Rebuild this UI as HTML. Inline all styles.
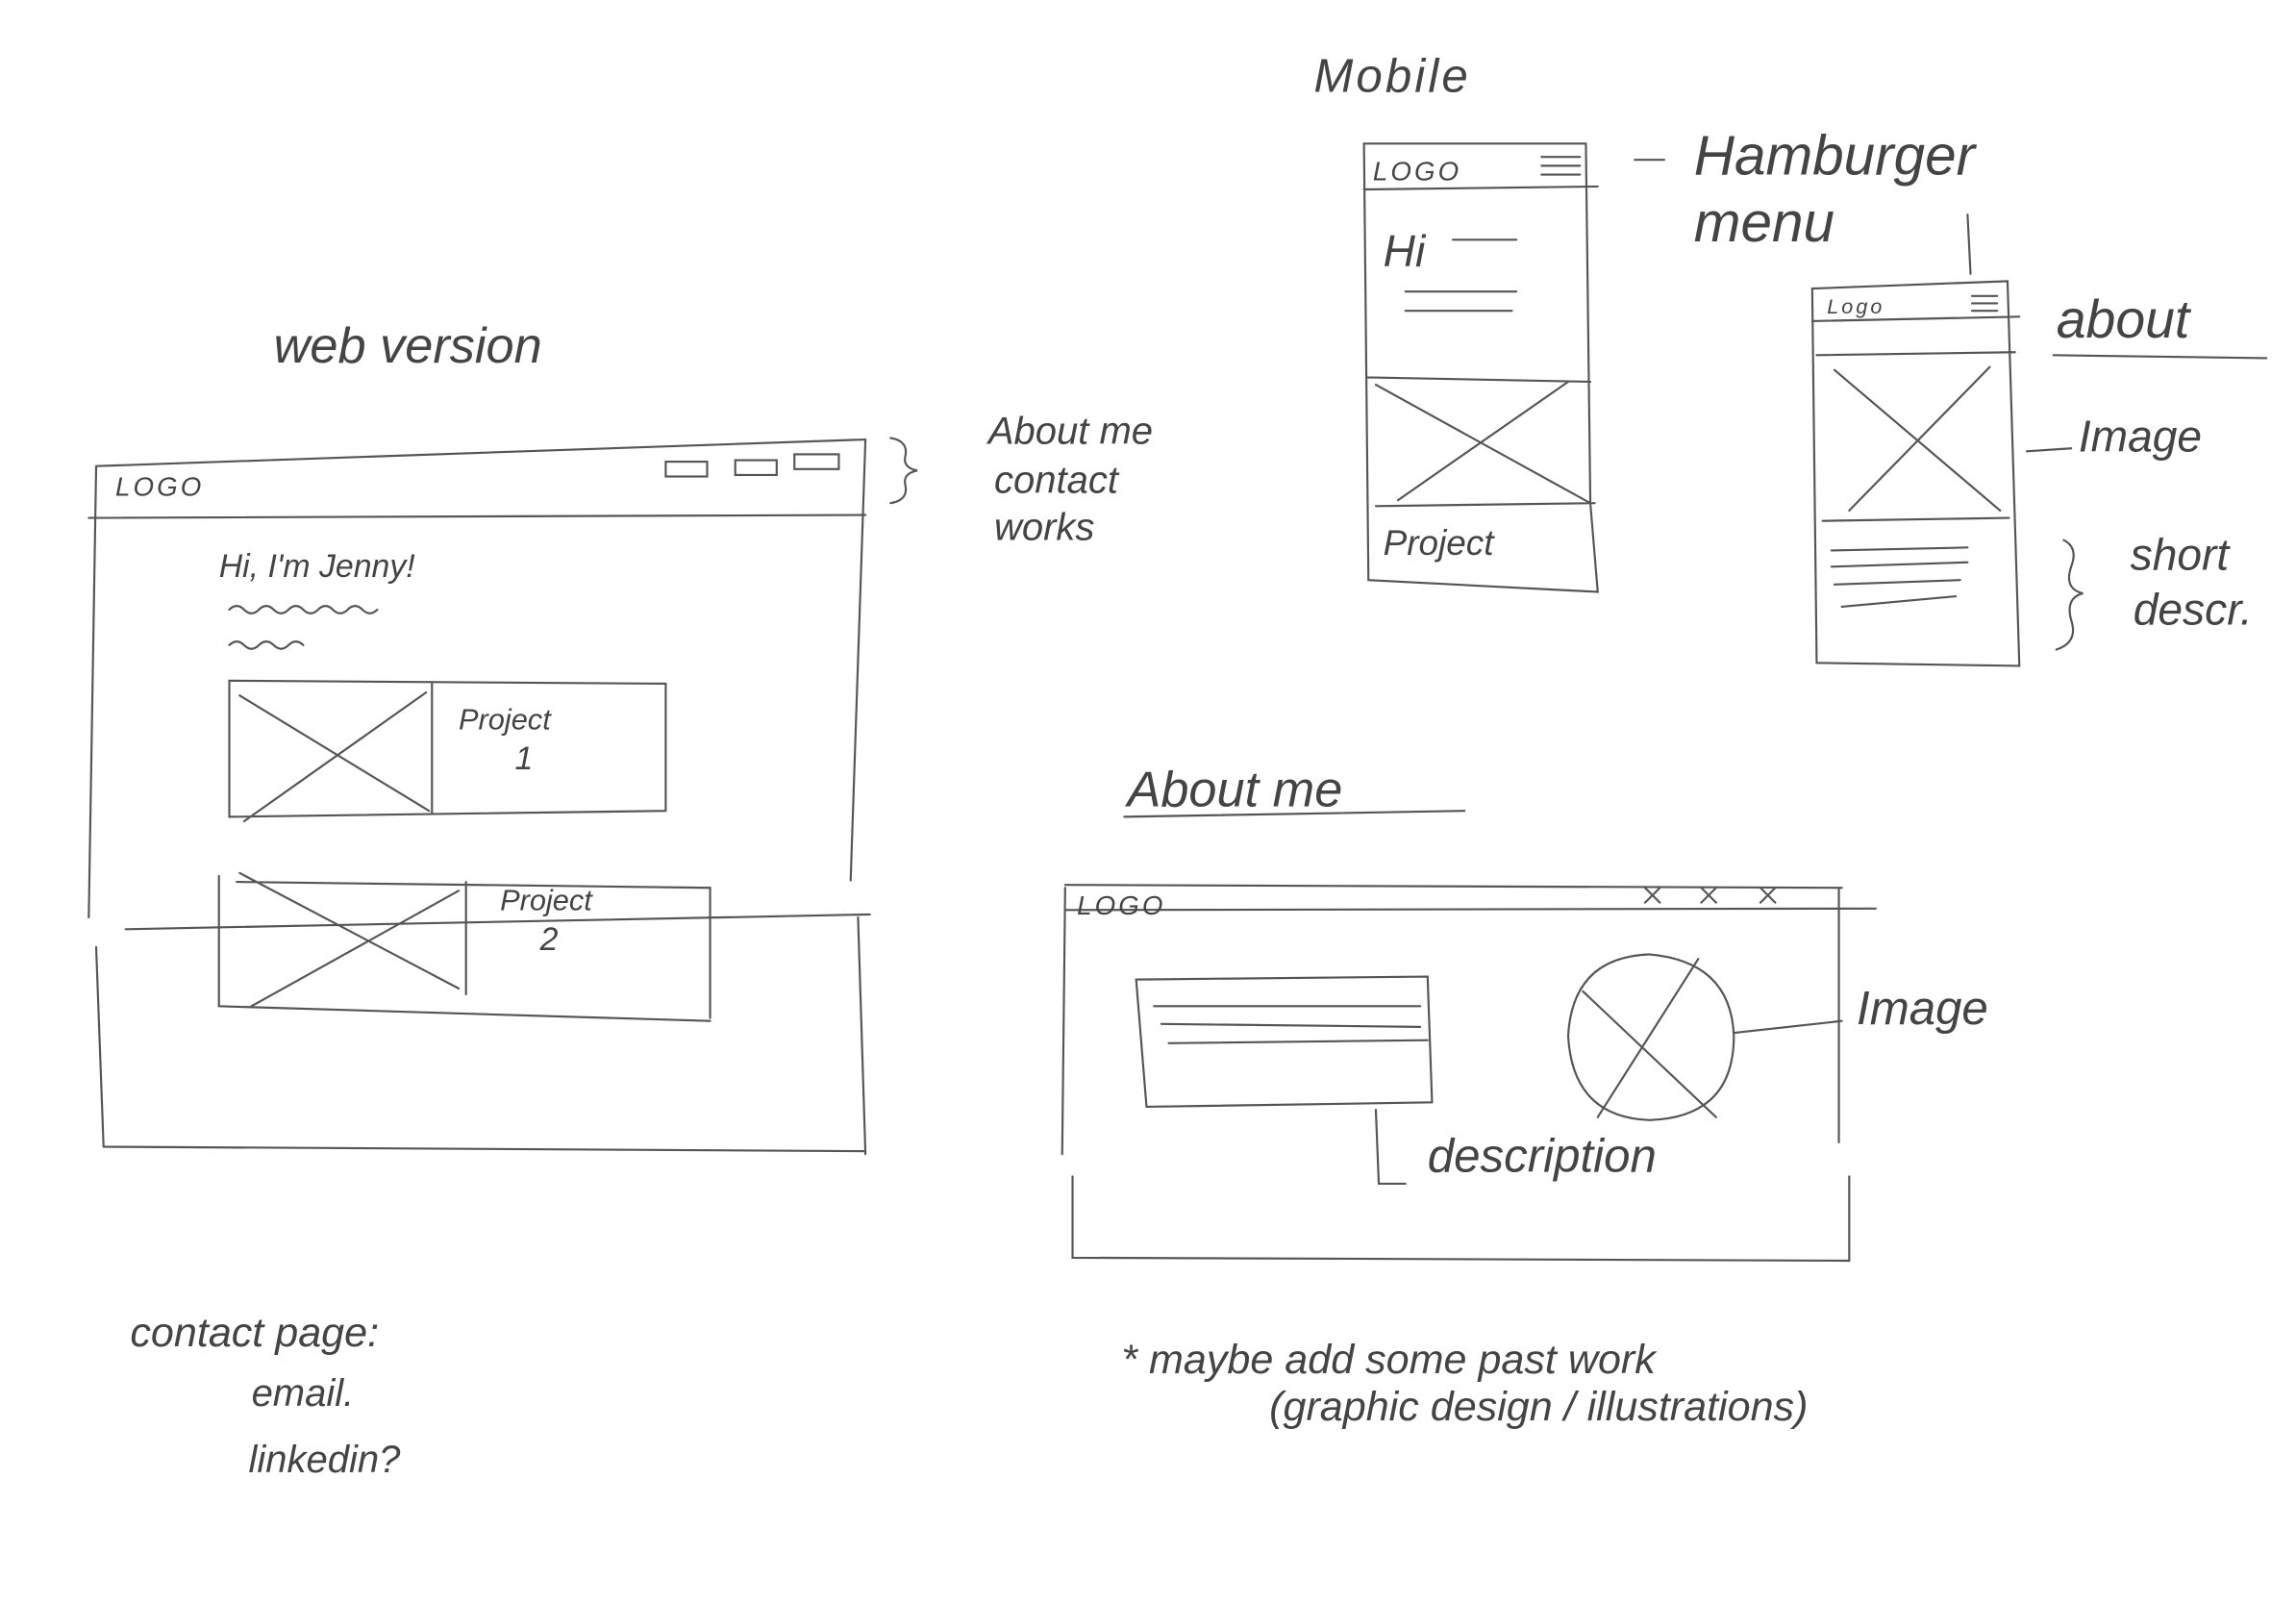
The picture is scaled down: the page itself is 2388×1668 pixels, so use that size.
<!DOCTYPE html>
<html><head><meta charset="utf-8"><style>
html,body{margin:0;padding:0;background:#fff;width:2388px;height:1668px;overflow:hidden}
svg{display:block}
text{font-family:"Liberation Sans",sans-serif;fill:#444;font-style:italic;font-weight:300}
</style></head><body>
<svg width="2388" height="1668" viewBox="0 0 1552 1084" xmlns="http://www.w3.org/2000/svg">
<rect width="1552" height="1084" fill="#fff"/>
<g fill="none" stroke="#555" stroke-width="1.4" stroke-linecap="round">
<path d="M65 315 L585 297 M65 315 L60 620 M585 297 L575 595 M60 350 L585 348"/>
<rect x="450" y="312" width="28" height="10"/><rect x="497" y="311" width="28" height="10"/><rect x="537" y="307" width="30" height="10"/>
<path d="M155 412 q5-5 10 0 t10 0 t10 0 t10 0 t10 0 t10 0 t10 0 t10 0 t10 0 t10 0 M155 436 q5-5 10 0 t10 0 t10 0 t10 0 t10 0"/>
<path d="M155 460 L450 462 L450 548 L155 552 Z M292 462 L292 550 M162 470 L290 548 M165 555 L288 468"/>
<path d="M85 628 L588 618"/>
<path d="M148 592 L148 680 L480 690 M160 596 L480 600 L480 688 M315 596 L315 672 M162 590 L310 668 M170 680 L310 602"/>
<path d="M65 640 L70 775 M580 620 L585 780 M70 775 L585 778"/>
<path d="M602 296 q12 2 10 12 q-2 8 8 10 q-10 2-8 10 q2 10-10 12"/>
<path d="M922 97 L1072 97 L1075 340 L1080 400 L925 392 Z M922 128 L1080 126 M924 255 L1075 258 M930 342 L1078 340 M930 260 L1075 340 M945 338 L1060 258"/>
<path d="M1042 106 L1068 106 M1042 112 L1068 112 M1042 118 L1068 118 M982 162 L1025 162 M950 197 L1025 197 M950 210 L1022 210"/>
<path d="M1105 108 L1125 108 M1330 145 L1332 185"/>
<path d="M1225 195 L1357 190 L1365 450 L1228 448 Z M1225 217 L1365 214 M1228 240 L1362 238 M1232 352 L1358 350 M1240 250 L1352 345 M1250 345 L1345 248"/>
<path d="M1333 200 L1350 200 M1333 205 L1350 205 M1333 210 L1350 210"/>
<path d="M1238 372 L1330 370 M1238 383 L1330 380 M1240 395 L1325 392 M1245 410 L1322 403"/>
<path d="M1388 240 L1532 242 M1370 305 L1400 303"/>
<path d="M1395 365 q10 5 5 18 q-5 15 8 18 q-12 3-8 18 q5 15-10 20"/>
<path d="M760 552 L990 548"/>
<path d="M720 598 L1245 600 M720 615 L1268 614 M720 600 L718 780 M1243 600 L1243 772 M725 795 L725 850 L1250 852 L1250 795"/>
<path d="M1112 600 l10 10 m0 -10 l-10 10 M1150 600 l10 10 m0 -10 l-10 10 M1190 600 l10 10 m0 -10 l-10 10"/>
<path d="M768 662 L965 660 L968 745 L775 748 Z M780 680 L960 680 M785 692 L960 694 M790 705 L965 703 M930 750 L932 800 L950 800"/>
<path d="M1115 645 q55 5 57 55 q0 55-57 57 q-52-2-55-57 q3-53 55-55 Z M1070 670 L1160 755 M1080 755 L1148 648"/>
<path d="M1172 698 L1245 690"/>
</g>
<g>
<text x="185" y="245" font-size="34">web version</text>
<text x="78" y="335" font-size="18" letter-spacing="2">LOGO</text>
<text x="148" y="390" font-size="22">Hi, I'm Jenny!</text>
<text x="310" y="493" font-size="20">Project</text><text x="348" y="520" font-size="22">1</text>
<text x="338" y="615" font-size="20">Project</text><text x="365" y="642" font-size="22">2</text>
<text x="668" y="300" font-size="26">About me</text>
<text x="672" y="333" font-size="26">contact</text>
<text x="672" y="365" font-size="26">works</text>
<text x="888" y="62" font-size="32" letter-spacing="2">Mobile</text>
<text x="928" y="122" font-size="18" letter-spacing="2">LOGO</text>
<text x="935" y="180" font-size="30">Hi</text>
<text x="935" y="375" font-size="24">Project</text>
<text x="1145" y="118" font-size="38">Hamburger</text>
<text x="1145" y="163" font-size="38">menu</text>
<text x="1235" y="212" font-size="14" letter-spacing="2">Logo</text>
<text x="1390" y="228" font-size="36">about</text>
<text x="1405" y="305" font-size="30">Image</text>
<text x="1440" y="385" font-size="30">short</text>
<text x="1442" y="422" font-size="30">descr.</text>
<text x="762" y="545" font-size="34">About me</text>
<text x="728" y="618" font-size="18" letter-spacing="2">LOGO</text>
<text x="1255" y="692" font-size="32">Image</text>
<text x="965" y="792" font-size="32">description</text>
<text x="88" y="910" font-size="28">contact page:</text>
<text x="170" y="950" font-size="26">email.</text>
<text x="168" y="995" font-size="26">linkedin?</text>
<text x="758" y="928" font-size="28">* maybe add some past work</text>
<text x="858" y="960" font-size="28">(graphic design / illustrations)</text>
</g>
</svg>
</body></html>
